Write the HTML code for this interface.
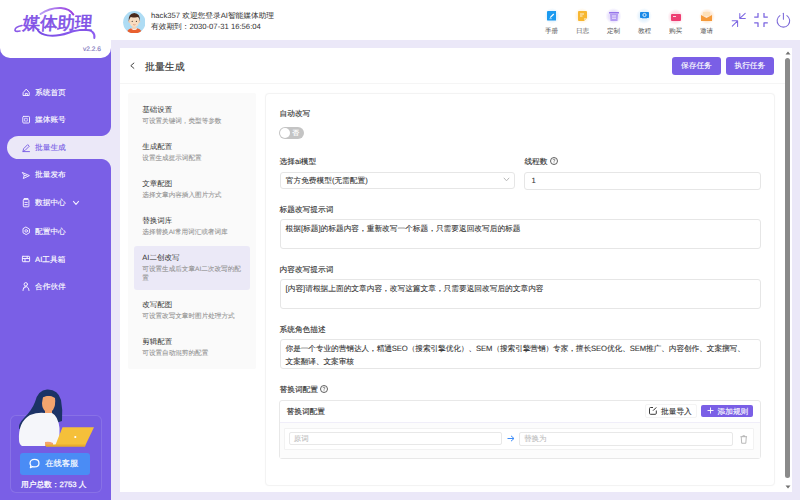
<!DOCTYPE html>
<html><head><meta charset="utf-8">
<style>
*{box-sizing:border-box;margin:0;padding:0}
html,body{width:800px;height:500px;overflow:hidden;background:#ebe8f8;font-family:"Liberation Sans",sans-serif;color:#333;text-rendering:geometricPrecision}

.abs{position:absolute}
.tk{-webkit-text-stroke:0.12px currentColor}
#side{position:absolute;left:0;top:0;width:111px;height:500px;background:#7a5fe6}
#logo{position:absolute;left:0;top:0;width:111px;height:58px;background:#fff;border-radius:0 0 10px 10px}
#hdr{position:absolute;left:111px;top:0;width:689px;height:40px;background:#fff}
.mi{position:absolute;left:0;width:111px;height:22px;color:#fff;font-size:7.7px;line-height:22px;-webkit-text-stroke:0.12px currentColor}
.mi .ic{position:absolute;left:22px;top:7.5px;width:8px;height:8px}
.mi .tx{position:absolute;left:35px;top:0}
#card{position:absolute;left:119.5px;top:48px;width:672.5px;height:443.6px;background:#fff}
.btn{position:absolute;height:17.5px;border-radius:3px;background:#7a5fe6;color:#fff;font-size:7.7px;line-height:17.5px;text-align:center;-webkit-text-stroke:0.12px #fff}
#subp{position:absolute;left:128px;top:93.3px;width:128px;height:276px;background:#fafafa;border-radius:2px}
.si{position:absolute;left:142.3px;font-size:7.5px;color:#333;white-space:nowrap}
.sd{position:absolute;left:142.3px;font-size:6.6px;color:#929292;white-space:nowrap;-webkit-text-stroke:0.08px #929292}
#form{position:absolute;left:264.7px;top:93px;width:510px;height:393px;border:1px solid #f3f3f3;border-radius:4px;background:#fff;box-shadow:0 0 1.5px rgba(0,0,0,0.03)}
.lb{position:absolute;left:279.5px;font-size:7.7px;color:#333;white-space:nowrap;line-height:9px;-webkit-text-stroke:0.12px #333}
.inp{position:absolute;border:1px solid #e6e6e6;border-radius:3px;background:#fff;font-size:7.7px;color:#333;white-space:nowrap;-webkit-text-stroke:0.08px currentColor}
.hl{position:absolute;font-size:6.6px;color:#555;white-space:nowrap;text-align:center;width:30px;line-height:8px}
</style></head><body>
<div id="side"></div>
<div id="logo">
 <svg class="abs" style="left:0;top:0" width="111" height="58" viewBox="0 0 111 58">
  <defs><linearGradient id="lg" x1="0" x2="1" y1="0" y2="0"><stop offset="0" stop-color="#9b6df0"/><stop offset="1" stop-color="#7048e0"/></linearGradient></defs>
  <defs><linearGradient id="lg2" x1="0" x2="1"><stop offset="0" stop-color="#b9a0f5"/><stop offset="1" stop-color="#9a3fe0"/></linearGradient>
  <linearGradient id="lg3" x1="0" x2="1"><stop offset="0" stop-color="#7a4ee6"/><stop offset="1" stop-color="#8d5cf0"/></linearGradient></defs>
  <path d="M40.5 14 Q50 7.5 61 8 Q70 8.8 73.3 14.5" fill="none" stroke="url(#lg2)" stroke-width="2.1" stroke-linecap="round"/>
  <path d="M38 30.5 C42 36 52 36.5 60 35 C66 34 70 32 74 31 C82 29.5 89 29 92.5 32 C94.5 34 94.8 36 94.3 38" fill="none" stroke="url(#lg3)" stroke-width="2" stroke-linecap="round"/>
  <path d="M22 25.5 Q14.5 27 15 30.5 Q16 32 20 31" fill="none" stroke="#8b5ae8" stroke-width="1.6" stroke-linecap="round"/>
 </svg>
 <div class="abs" style="left:21.5px;top:12.8px;font-size:17.6px;line-height:20px;font-weight:400;color:#8152e6;-webkit-text-stroke:0.6px #8152e6;white-space:nowrap;letter-spacing:-0.2px;transform:skewX(-4deg);transform-origin:0 100%;background:none">媒体助理</div>
 <div class="abs" style="left:83px;top:45.5px;font-size:6.6px;line-height:8px;color:#7f76bd;-webkit-text-stroke:0.15px #7f76bd">v2.2.6</div>
</div>
<div class="abs" style="left:7px;top:135.6px;width:104px;height:23.4px;background:#ebe8f8;border-radius:11.7px 0 0 11.7px"></div>
<div class="abs" style="left:101px;top:125.6px;width:10px;height:10px;background:radial-gradient(circle at 0 0,#7a5fe6 9.5px,#ebe8f8 10.5px)"></div>
<div class="abs" style="left:101px;top:159px;width:10px;height:10px;background:radial-gradient(circle at 0 100%,#7a5fe6 9.5px,#ebe8f8 10.5px)"></div>
<div class="mi" style="top:81.8px"><span class="tx">系统首页</span></div>
<div class="mi" style="top:109.1px"><span class="tx">媒体账号</span></div>
<div class="mi" style="top:136.7px;color:#7a5fe6"><span class="tx">批量生成</span></div>
<div class="mi" style="top:164.2px"><span class="tx">批量发布</span></div>
<div class="mi" style="top:192px"><span class="tx">数据中心</span><svg class="abs" style="left:72px;top:8px" width="8" height="6" viewBox="0 0 8 6"><path d="M1.2 1.2 L4 4.3 L6.8 1.2" fill="none" stroke="#f4f0ff" stroke-width="1.1" stroke-linejoin="round"/></svg></div>
<div class="mi" style="top:220.7px"><span class="tx">配置中心</span></div>
<div class="mi" style="top:248.5px"><span class="tx">AI工具箱</span></div>
<div class="mi" style="top:276.1px"><span class="tx">合作伙伴</span></div>
<svg class="abs" style="left:0;top:0" width="111" height="300" viewBox="0 0 111 300" fill="none" stroke-linejoin="round" stroke-linecap="round">
 <g stroke="#f4f0ff" stroke-width="0.95">
  <path d="M23.4 92.3 L26.2 89.1 L29.2 92.3 V95.5 H23.4 Z M25.3 95.5 V93.4 H27.3 V95.5"/>
  <rect x="22.8" y="116.4" width="6.7" height="6.6" rx="0.8"/>
  <path d="M25 118.3 H27.3 V121.1 H25 Z" stroke-width="0.7"/>
  <path d="M22.6 172.6 L29.4 175.6 L23.3 178.5 L24.2 175.6 Z M24.2 175.6 H26.3"/>
  <path d="M24.2 198.5 H27.9"/>
  <rect x="23.3" y="199.6" width="5.6" height="7.2" rx="0.7"/>
  <path d="M24.9 202.4 H27.3 M24.9 204.6 H27.3"/>
  <path d="M26.2 227.2 L29.4 229.05 V232.75 L26.2 234.6 L23 232.75 V229.05 Z"/>
  <circle cx="26.2" cy="230.9" r="1.3"/>
  <rect x="22.4" y="256.3" width="7.2" height="5.4" rx="0.5"/>
  <path d="M22.4 258.5 H29.6 M25 258.5 V261.7 M27.2 256.3 V258.5"/>
  <circle cx="25.8" cy="284.3" r="1.7"/>
  <path d="M23 290.5 Q23.3 286.6 25.8 286.6 Q28.6 286.6 29 290.5 M25.4 287.3 L23.5 288.2"/>
 </g>
 <path d="M23 151.2 L23.6 148.7 L27.7 144.6 L29.3 146.2 L25.2 150.3 Z M23 151.6 H29.5" stroke="#7a5fe6" stroke-width="0.95"/>
</svg>
<div class="abs" style="left:9.6px;top:414.8px;width:92.4px;height:78px;border-radius:6px;background:rgba(70,50,190,0.07);border:1px solid rgba(255,255,255,0.13)"></div>
<svg class="abs" style="left:10px;top:380px" width="90" height="75" viewBox="10 380 90 75">
 <path d="M47 389.5 Q58 389 61 400 Q63 410 62 421 L56 423 L30 423 Q22 428 19 429 Q18 424 24 418 Q32 410 35 402 Q38 390 47 389.5 Z" fill="#1c3366"/>
 <path d="M43 397 Q49 394 55 398 Q56 405 53 410 Q50 413 46 412 Q42 409 42 403 Z" fill="#f4a46e"/>
 <path d="M45 409 L52 409 L52 415 L45 415 Z" fill="#f4a46e"/>
 <path d="M41 399 Q45 395 52 396 Q48 392 43 394 Z" fill="#1c3366"/>
 <path d="M19 440 Q18 422 30 415 Q38 412 45 413 L52 413 Q58 416 59.5 428 L59.5 446 L22 446 Q19 444 19 440 Z" fill="#f5f6fa"/>
 <path d="M45 442 Q49 441 53 443 L53 446 L45 446 Z" fill="#f4a46e"/>
 <path d="M62.5 427.3 L94 427.3 L85 446 L55 446 Z" fill="#f5c03a"/>
 <path d="M46 444.5 L85.5 444.5 L85 446.8 L46 446.8 Z" fill="#e9ad2c"/>
 <circle cx="75.3" cy="437" r="1.1" fill="#fff"/>
</svg>
<div class="abs" style="left:19.5px;top:453px;width:70.5px;height:21.5px;background:#4a8cf5;border-radius:3px"></div>
<svg class="abs" style="left:29px;top:458px" width="11" height="11" viewBox="0 0 16 16"><path d="M8 2 C12 2 14.5 4.5 14.5 7.5 C14.5 10.5 12 13 8 13 C7 13 6 12.8 5.2 12.5 L2 14 L2.8 11 C2 10 1.5 8.8 1.5 7.5 C1.5 4.5 4 2 8 2 Z" fill="none" stroke="#fff" stroke-width="1.8" stroke-linejoin="round"/></svg>
<div class="abs" style="left:45.2px;top:453.2px;line-height:21.6px;font-size:8.3px;color:#fff;white-space:nowrap;-webkit-text-stroke:0.15px #fff">在线客服</div>
<div class="abs" style="left:21px;top:479.5px;line-height:10px;font-size:7.7px;color:#fff;white-space:nowrap;-webkit-text-stroke:0.25px #fff">用户总数：2753 人</div>
<div id="hdr"></div>
<svg class="abs" style="left:122.5px;top:10.5px" width="22.6" height="22.6" viewBox="122.5 10.5 22.6 22.6">
 <circle cx="133.8" cy="21.8" r="11.2" fill="#aedcf4"/>
 <clipPath id="cc"><circle cx="133.8" cy="21.8" r="11.2"/></clipPath>
 <g clip-path="url(#cc)">
  <path d="M125.5 34 Q126 28 133.8 27.3 Q141.6 28 142 34 Z" fill="#e9602f"/>
  <path d="M131.8 25 H135.8 V28.2 Q133.8 29.4 131.8 28.2 Z" fill="#f3d2b4"/>
  <path d="M131 27.6 Q133.8 29.8 136.6 27.6 L136.6 28.6 Q133.8 30.6 131 28.6 Z" fill="#fff"/>
  <ellipse cx="133.8" cy="20.6" rx="5" ry="5.8" fill="#f8dcc0"/>
  <ellipse cx="128.8" cy="21" rx="0.9" ry="1.3" fill="#f3c9a6"/><ellipse cx="138.8" cy="21" rx="0.9" ry="1.3" fill="#f3c9a6"/>
  <path d="M128.2 21 Q127.6 12.8 133.8 12.4 Q140 12.8 139.4 21 Q138.8 17.6 137.6 16.6 Q134.5 17.4 130.2 16.4 Q128.9 17.6 128.2 21 Z" fill="#4a2a1c"/>
  <circle cx="131.7" cy="20.8" r="0.6" fill="#3a2a20"/><circle cx="135.9" cy="20.8" r="0.6" fill="#3a2a20"/>
  <path d="M132.6 24 Q133.8 24.8 135 24" fill="none" stroke="#c8664a" stroke-width="0.5"/>
 </g>
</svg>
<div class="abs" style="left:151px;top:11px;font-size:7.7px;line-height:9px;color:#333;white-space:nowrap">hack357 欢迎您登录AI智能媒体助理</div>
<div class="abs" style="left:151px;top:21.5px;font-size:7.7px;line-height:9px;color:#333;white-space:nowrap">有效期到：2030-07-31 16:56:04</div>
<!-- header icons -->
<div class="abs" style="left:543.6px;top:8px;width:16px;height:16px;border-radius:8px;background:radial-gradient(circle closest-side,#e6f3fd 60%,rgba(255,255,255,0) 100%)"></div>
<svg class="abs" style="left:546.8px;top:11.2px" width="9.6" height="9.6" viewBox="0 0 10 10"><rect width="10" height="10" rx="1" fill="#1a9af0"/><path d="M3 7.2 L3.3 6 L6.6 2.7 L7.5 3.6 L4.2 6.9 Z" fill="#fff"/><path d="M2.5 8 H5" stroke="#fff" stroke-width="0.6"/></svg>
<div class="abs" style="left:574px;top:8px;width:16px;height:16px;border-radius:8px;background:radial-gradient(circle closest-side,#fff3e0 60%,rgba(255,255,255,0) 100%)"></div>
<svg class="abs" style="left:577.5px;top:11px" width="9" height="10" viewBox="0 0 9 10"><path d="M0 1 Q0 0 1 0 H8 Q9 0 9 1 V7 L6 10 H1 Q0 10 0 9 Z" fill="#f7b731"/><path d="M6 10 V7 H9 Z" fill="#fbd88a"/><path d="M2 3 H6 M2 5 H4.5" stroke="#fff" stroke-width="0.8"/></svg>
<div class="abs" style="left:605.3px;top:7.8px;width:16.5px;height:16.5px;border-radius:8.25px;background:radial-gradient(circle closest-side,#e8e1fc 60%,rgba(255,255,255,0) 100%)"></div>
<svg class="abs" style="left:608.5px;top:11.5px" width="10" height="9" viewBox="0 0 10 9"><rect x="0" y="0" width="10" height="1.6" rx="0.5" fill="#9575ea"/><path d="M1 2 H9 L8.5 9 H1.5 Z" fill="#b49cf2"/><path d="M3 4 H7 M3 6.2 H7" stroke="#fff" stroke-width="0.8"/></svg>
<div class="abs" style="left:636.4px;top:7.5px;width:16px;height:16px;border-radius:8px;background:radial-gradient(circle closest-side,#e6f3fd 60%,rgba(255,255,255,0) 100%)"></div>
<svg class="abs" style="left:640px;top:11.9px" width="9" height="7" viewBox="0 0 9 7"><rect width="9" height="6" rx="0.8" fill="#1a8ae8"/><circle cx="4.5" cy="3" r="1.6" fill="none" stroke="#fff" stroke-width="0.8"/><rect x="2" y="6.3" width="5" height="0.7" fill="#8cc4f4"/></svg>
<div class="abs" style="left:667.4px;top:8.5px;width:16.5px;height:16.5px;border-radius:8.25px;background:radial-gradient(circle closest-side,#fcdfe8 60%,rgba(255,255,255,0) 100%)"></div>
<svg class="abs" style="left:670.6px;top:13.5px" width="10" height="7" viewBox="0 0 10 7"><rect width="10" height="7" rx="1" fill="#ee3d72"/><path d="M2 2.5 H5" stroke="#fff" stroke-width="0.8"/></svg>
<div class="abs" style="left:698.5px;top:8.3px;width:16.5px;height:16.5px;border-radius:8.25px;background:radial-gradient(circle closest-side,#ffe8d2 60%,rgba(255,255,255,0) 100%)"></div>
<svg class="abs" style="left:701px;top:12px" width="11" height="9" viewBox="0 0 11 9"><path d="M2 0 H9 V4 H2 Z" fill="#fde0b8"/><path d="M0 3 L5.5 6 L11 3 V9 H0 Z" fill="#f59a3a"/></svg>
<div class="hl" style="left:536.5px;top:28px">手册</div>
<div class="hl" style="left:567.5px;top:28px">日志</div>
<div class="hl" style="left:598.5px;top:28px">定制</div>
<div class="hl" style="left:629.5px;top:28px">教程</div>
<div class="hl" style="left:660.5px;top:28px">购买</div>
<div class="hl" style="left:691.5px;top:28px">邀请</div>
<svg class="abs" style="left:725px;top:5px" width="75" height="30" viewBox="725 5 75 30" fill="none" stroke-linecap="round" stroke-linejoin="round">
 <g stroke="#7e68e2" stroke-width="1.05">
  <path d="M739.8 13.4 V18.4 H745.3 M739.8 18.4 L745.2 13.3"/>
  <path d="M732.2 20.8 H737.6 V26.4 M737.6 20.8 L732.3 26.1"/>
 </g>
 <g stroke="#7a64e0" stroke-width="1.25" stroke-linecap="butt">
  <path d="M758 13 V17.2 H754.2 M764 13 V17.2 H767.8 M754.2 22.8 H758 V26.9 M767.8 22.8 H764 V26.9"/>
 </g>
 <g stroke="#7b68d8" stroke-width="1.05">
  <path d="M783.4 13.2 V19.2"/>
  <path d="M779.9 15.6 A6.3 6.3 0 1 0 786.9 15.6"/>
 </g>
</svg>
<div id="card"></div>
<svg class="abs" style="left:128.5px;top:62px" width="7" height="8" viewBox="0 0 7 8"><path d="M5.2 0.8 L1.8 3.7 L5.2 6.6" fill="none" stroke="#444" stroke-width="1"/></svg>
<div class="abs" style="left:145px;top:61.8px;font-size:9.9px;line-height:12px;color:#333;white-space:nowrap;-webkit-text-stroke:0.15px #333">批量生成</div>
<div class="btn" style="left:671.9px;top:57.25px;width:49px">保存任务</div>
<div class="btn" style="left:725.6px;top:57.25px;width:48.5px">执行任务</div>
<div class="abs" style="left:119.5px;top:83px;width:665px;height:1px;background:#f5f5f5"></div>
<!-- scrollbar -->
<div class="abs" style="left:784.5px;top:58px;width:5.5px;height:420px;background:#8a8a8a;border-radius:3px"></div>
<svg class="abs" style="left:784.5px;top:51px" width="6" height="4" viewBox="0 0 6 4"><path d="M0.5 3.5 L3 0.5 L5.5 3.5 Z" fill="#707070"/></svg>
<svg class="abs" style="left:784.5px;top:484.5px" width="6" height="4" viewBox="0 0 6 4"><path d="M0.5 0.5 L3 3.5 L5.5 0.5 Z" fill="#707070"/></svg>
<!-- sub panel -->
<div id="subp"></div>
<div class="abs" style="left:133.6px;top:245.7px;width:116.8px;height:44px;background:#ebe9f7;border-radius:3px"></div>
<div class="si" style="top:104.5px">基础设置</div><div class="sd" style="top:116.5px">可设置关键词，类型等参数</div>
<div class="si" style="top:141.5px">生成配置</div><div class="sd" style="top:153.5px">设置生成提示词配置</div>
<div class="si" style="top:178.5px">文章配图</div><div class="sd" style="top:190.5px">选择文章内容插入图片方式</div>
<div class="si" style="top:215.5px">替换词库</div><div class="sd" style="top:227.5px">选择替换AI常用词汇或者词库</div>
<div class="si" style="top:252.5px">AI二创改写</div><div class="sd" style="top:264.8px;line-height:9.2px">可设置生成后文章AI二次改写的配<br>置</div>
<div class="si" style="top:299.5px">改写配图</div><div class="sd" style="top:311.5px">可设置改写文章时图片处理方式</div>
<div class="si" style="top:336.5px">剪辑配置</div><div class="sd" style="top:348.5px">可设置自动混剪的配置</div>
<!-- form -->
<div id="form"></div>
<div class="lb" style="top:108.5px">自动改写</div>
<div class="abs" style="left:279.3px;top:127px;width:24.6px;height:12.3px;border-radius:6.2px;background:#c4c4c4"></div>
<div class="abs" style="left:279.8px;top:128.1px;width:10px;height:10px;border-radius:5px;background:#fff"></div>
<div class="abs" style="left:292.3px;top:129px;font-size:6.8px;line-height:9px;color:#fff;-webkit-text-stroke:0.2px #fff">否</div>
<div class="lb" style="top:157px">选择ai模型</div>
<div class="inp" style="left:279.75px;top:171.5px;width:235px;height:17.8px;line-height:16px;padding-left:5px">官方免费模型(无需配置)</div>
<svg class="abs" style="left:502.5px;top:177.3px" width="7" height="5" viewBox="0 0 7 5"><path d="M0.8 0.8 L3.5 3.8 L6.2 0.8" fill="none" stroke="#b8b8b8" stroke-width="1"/></svg>
<div class="lb" style="left:524.4px;top:157px">线程数</div>
<svg class="abs" style="left:549.7px;top:157px" width="8" height="8" viewBox="0 0 16 16"><circle cx="8" cy="8" r="7" fill="none" stroke="#444" stroke-width="1.7"/><path d="M6 6.3 Q6 4.3 8 4.3 Q10 4.3 10 6.1 Q10 7.3 8 8.1 V9.4" fill="none" stroke="#555" stroke-width="1.3"/><circle cx="8" cy="11.5" r="0.9" fill="#555"/></svg>
<div class="inp" style="left:524.4px;top:171.75px;width:236.2px;height:18px;line-height:16px;padding-left:6px">1</div>
<div class="lb" style="top:204.5px">标题改写提示词</div>
<div class="inp" style="left:279.6px;top:219px;width:481px;height:30px;padding:4px 0 0 5px;line-height:9px">根据[标题]的标题内容，重新改写一个标题，只需要返回改写后的标题</div>
<div class="lb" style="top:264.5px">内容改写提示词</div>
<div class="inp" style="left:279.6px;top:279px;width:481px;height:30px;padding:3.5px 0 0 5px;line-height:9px">[内容]请根据上面的文章内容，改写这篇文章，只需要返回改写后的文章内容</div>
<div class="lb" style="top:324.5px">系统角色描述</div>
<div class="inp" style="left:279.6px;top:339px;width:481px;height:30px;padding:3px 0 0 5px;line-height:12.5px;letter-spacing:-0.1px">你是一个专业的营销达人，精通SEO（搜索引擎优化）、SEM（搜索引擎营销）专家，擅长SEO优化、SEM推广、内容创作、文案撰写、<br>文案翻译、文案审核</div>
<div class="lb" style="top:384.5px">替换词配置</div>
<svg class="abs" style="left:320.3px;top:385.2px" width="8" height="8" viewBox="0 0 16 16"><circle cx="8" cy="8" r="7" fill="none" stroke="#444" stroke-width="1.7"/><path d="M6 6.3 Q6 4.3 8 4.3 Q10 4.3 10 6.1 Q10 7.3 8 8.1 V9.4" fill="none" stroke="#555" stroke-width="1.3"/><circle cx="8" cy="11.5" r="0.9" fill="#555"/></svg>
<div class="abs" style="left:279px;top:399.5px;width:481.5px;height:59px;border:1px solid #e8e8e8;border-radius:3px;background:#fff"></div>
<div class="abs" style="left:280px;top:422px;width:479.5px;height:35.5px;background:#fcfcfc;border-top:1px solid #f0eef9"></div>
<div class="abs" style="left:286.5px;top:407px;font-size:7.7px;line-height:9px;color:#333;white-space:nowrap;-webkit-text-stroke:0.12px #333">替换词配置</div>
<div class="abs" style="left:645px;top:403.75px;width:51.5px;height:14px;border:1px solid #f4f4f4;border-radius:2px;background:#fff"></div>
<svg class="abs" style="left:645px;top:402px" width="15" height="16" viewBox="645 402 15 16"><path d="M653 407.5 H650.5 Q649.5 407.5 649.5 408.5 V413.3 Q649.5 414.3 650.5 414.3 H655.3 Q656.3 414.3 656.3 413.3 V410.5" fill="none" stroke="#3a3a3a" stroke-width="1"/><path d="M653.3 410.4 L656 407.7" stroke="#2a2a2a" stroke-width="1" stroke-linecap="round"/></svg>
<div class="abs" style="left:661px;top:406.5px;font-size:7.7px;line-height:9px;color:#333;white-space:nowrap;-webkit-text-stroke:0.12px #333">批量导入</div>
<div class="btn" style="left:701.4px;top:404.6px;width:51.6px;height:12.8px;line-height:12.8px;border-radius:2px"></div>
<svg class="abs" style="left:706.5px;top:407px" width="7" height="7" viewBox="0 0 7 7"><path d="M3.5 0.5 V6.5 M0.5 3.5 H6.5" stroke="#fff" stroke-width="0.9"/></svg>
<div class="abs" style="left:717.5px;top:406.5px;font-size:7.7px;line-height:9px;color:#fff;white-space:nowrap;-webkit-text-stroke:0.12px #fff">添加规则</div>
<div class="abs" style="left:284.2px;top:427.5px;width:470px;height:22.5px;border:1px solid #f2f2f2;border-radius:1px;background:#fff"></div>
<div class="inp" style="left:288.7px;top:431.7px;width:213px;height:13.5px;font-size:7.5px;line-height:11.5px;padding-left:4px;color:#bdbdbd;border-color:#e8e8e8;border-radius:2px">原词</div>
<svg class="abs" style="left:506.5px;top:435px" width="8" height="7" viewBox="0 0 8 7"><path d="M0.5 3.5 H7 M4 0.8 L7 3.5 L4 6.2" fill="none" stroke="#3d8cf7" stroke-width="1"/></svg>
<div class="inp" style="left:519px;top:432px;width:214px;height:13.5px;font-size:7.5px;line-height:11.5px;padding-left:4px;color:#bdbdbd;border-color:#e8e8e8;border-radius:2px">替换为</div>
<svg class="abs" style="left:740px;top:435px" width="7.5" height="9" viewBox="0 0 8 9"><path d="M0.5 1.5 H7.5 M3 1.5 V0.5 H5 V1.5 M1.3 1.5 L1.8 8.5 H6.2 L6.7 1.5" fill="none" stroke="#a8a8a8" stroke-width="0.85"/></svg>
</body></html>
